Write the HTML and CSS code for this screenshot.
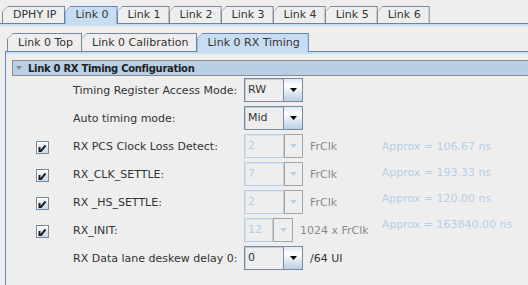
FILE: index.html
```html
<!DOCTYPE html>
<html lang="en">
<head>
    <meta charset="UTF-8">
    <title>Link 0 RX Timing</title>
    <link rel="stylesheet" href="styles.css">
</head>
<body>
    <div class="tabs">
        <div class="tab"><span>DPHY IP</span></div>
        <div class="tab tab-active"><span>Link 0</span></div>
        <div class="tab"><span>Link 1</span></div>
        <div class="tab"><span>Link 2</span></div>
        <div class="tab"><span>Link 3</span></div>
        <div class="tab"><span>Link 4</span></div>
        <div class="tab"><span>Link 5</span></div>
        <div class="tab"><span>Link 6</span></div>
    </div>

    <div class="pane">
        <div class="tabs sub-tabs">
            <div class="tab"><span>Link 0 Top</span></div>
            <div class="tab"><span>Link 0 Calibration</span></div>
            <div class="tab tab-active"><span>Link 0 RX Timing</span></div>
        </div>

        <div class="pane subpane">
            <div class="section-head"><i class="caret"></i>Link 0 RX Timing Configuration</div>

            <div class="form">
                <div class="rows">
                    <span></span>
                    <label>Timing Register Access Mode:</label>
                    <div class="ctl">
                        <div class="combo">
                            <div class="combo-field">RW</div>
                            <div class="combo-btn"><svg width="7" height="4"><path d="M0 0h7L3.5 4z"/></svg></div>
                        </div>
                    </div>

                    <span></span>
                    <label>Auto timing mode:</label>
                    <div class="ctl">
                        <div class="combo">
                            <div class="combo-field">Mid</div>
                            <div class="combo-btn"><svg width="7" height="4"><path d="M0 0h7L3.5 4z"/></svg></div>
                        </div>
                    </div>

                    <span class="check"><svg width="11" height="11"><path d="M2.5 5V9h1.5L8.5 3.5" fill="none" stroke="#222" stroke-width="2"/></svg></span>
                    <label>RX PCS Clock Loss Detect:</label>
                    <div class="ctl">
                        <div class="combo combo-off">
                            <div class="combo-field">2</div>
                            <div class="combo-btn"><svg width="7" height="4"><path d="M0 0h7L3.5 4z"/></svg></div>
                        </div>
                        <span class="unit">FrClk</span>
                    </div>

                    <span class="check"><svg width="11" height="11"><path d="M2.5 5V9h1.5L8.5 3.5" fill="none" stroke="#222" stroke-width="2"/></svg></span>
                    <label>RX_CLK_SETTLE:</label>
                    <div class="ctl">
                        <div class="combo combo-off">
                            <div class="combo-field">7</div>
                            <div class="combo-btn"><svg width="7" height="4"><path d="M0 0h7L3.5 4z"/></svg></div>
                        </div>
                        <span class="unit">FrClk</span>
                    </div>

                    <span class="check"><svg width="11" height="11"><path d="M2.5 5V9h1.5L8.5 3.5" fill="none" stroke="#222" stroke-width="2"/></svg></span>
                    <label>RX _HS_SETTLE:</label>
                    <div class="ctl">
                        <div class="combo combo-off">
                            <div class="combo-field">2</div>
                            <div class="combo-btn"><svg width="7" height="4"><path d="M0 0h7L3.5 4z"/></svg></div>
                        </div>
                        <span class="unit">FrClk</span>
                    </div>

                    <span class="check"><svg width="11" height="11"><path d="M2.5 5V9h1.5L8.5 3.5" fill="none" stroke="#222" stroke-width="2"/></svg></span>
                    <label>RX_INIT:</label>
                    <div class="ctl">
                        <div class="combo combo-off combo-small">
                            <div class="combo-field">12</div>
                            <div class="combo-btn"><svg width="7" height="4"><path d="M0 0h7L3.5 4z"/></svg></div>
                        </div>
                        <span class="unit">1024 x FrClk</span>
                    </div>

                    <span></span>
                    <label>RX Data lane deskew delay 0:</label>
                    <div class="ctl">
                        <div class="combo">
                            <div class="combo-field">0</div>
                            <div class="combo-btn"><svg width="7" height="4"><path d="M0 0h7L3.5 4z"/></svg></div>
                        </div>
                        <span>/64 UI</span>
                    </div>
                </div>

                <div class="approx">
                    <div>Approx = 106.67 ns</div>
                    <div>Approx = 193.33 ns</div>
                    <div>Approx = 120.00 ns</div>
                    <div>Approx = 163840.00 ns</div>
                </div>
            </div>
        </div>
    </div>
</body>
</html>
```

FILE: styles.css
```css
:root {
    --bg: #eeeeee;
    --blue-dark: #6382bf;
    --blue-light: #c8ddf2;
    --blue-mid: #b8cfe5;
    --steel: #7a8a99;
}

body {
    margin: 0;
    background: var(--bg);
    font-family: "DejaVu Sans", sans-serif;
    font-size: 11px;
    color: #333333;
    height: 285px;
    overflow: hidden;
}

/* tab strips */
.tabs {
    display: flex;
    align-items: flex-end;
    padding-left: 2px;
    margin-top: 6px;
    height: 17px;
}

.sub-tabs {
    margin-top: 0;
    height: 18px;
}

.tab {
    background: var(--steel);
    padding: 1px 1px 0;
    clip-path: polygon(0 6px, 6px 0, 100% 0, 100% 100%, 0 100%);
}

.tab + .tab {
    margin-left: -1px;
}

.tab span {
    display: block;
    height: 16px;
    line-height: 16px;
    padding: 0 8px 0 10px;
    background: var(--bg);
    white-space: nowrap;
    clip-path: polygon(0 4.6px, 4.6px 0, 100% 0, 100% 100%, 0 100%);
}

.sub-tabs .tab span {
    height: 17px;
    line-height: 17px;
}

.tab-active {
    position: relative;
    z-index: 1;
    margin-bottom: -1px;
    background: var(--blue-dark);
}

.tab-active span {
    height: 17px;
    background: var(--blue-light);
}

.sub-tabs .tab-active span {
    height: 18px;
}

/* panes */
.pane {
    border-top: 1px solid var(--blue-dark);
    box-shadow: inset 0 2px 0 var(--blue-light);
    padding: 9px 0 0 5px;
}

.subpane {
    box-sizing: border-box;
    border-left: 1px solid var(--blue-dark);
    padding: 8px 0 0 6px;
    height: 234px;
}

.section-head {
    display: flex;
    align-items: center;
    height: 14px;
    border: 1px solid #8c8c8c;
    border-right: 0;
    background: var(--blue-mid);
    padding-left: 3px;
    font-size: 10px;
    font-weight: bold;
    letter-spacing: -0.3px;
    color: #222222;
}

.caret {
    width: 0;
    height: 0;
    border-left: 3px solid transparent;
    border-right: 3px solid transparent;
    border-top: 4px solid #8a8a8a;
    margin-right: 6px;
}

/* form */
.form {
    display: flex;
    margin-top: 2px;
}

.rows {
    display: grid;
    grid-template-columns: 37px 171px auto;
    grid-auto-rows: 24px;
    row-gap: 4px;
    padding-left: 24px;
    align-items: center;
}

.check {
    box-sizing: border-box;
    width: 13px;
    height: 13px;
    margin-top: 3px;
    border: 1px solid var(--steel);
    background: linear-gradient(#f6f9fc, #c9d9ea);
    box-shadow: inset 1px 1px 0 #ffffff;
    display: flex;
}

.ctl {
    display: flex;
    align-items: center;
    gap: 7px;
    white-space: nowrap;
}

.unit {
    color: #8a8a8a;
}

.combo {
    display: flex;
    height: 24px;
}

.combo-field {
    box-sizing: border-box;
    width: 40px;
    border: 1px solid var(--steel);
    box-shadow: inset 1px 1px 0 var(--blue-mid);
    padding: 0 0 2px 3px;
    display: flex;
    align-items: center;
}

.combo-btn {
    box-sizing: border-box;
    width: 19px;
    border: 1px solid var(--steel);
    border-left: 0;
    background: linear-gradient(#dde8f3, #ffffff 30%, var(--blue-mid));
    display: flex;
    align-items: center;
    justify-content: center;
}

.combo-btn svg {
    fill: #000000;
}

.combo-off .combo-field {
    border-color: var(--blue-mid);
    box-shadow: inset 1px 1px 0 #d6e3f0;
    color: var(--blue-mid);
}

.combo-off .combo-btn {
    border: 1px solid #a4a4a4;
    background: var(--bg);
}

.combo-off .combo-btn svg {
    fill: var(--blue-mid);
}

.combo-small .combo-field {
    width: 29px;
}

.combo-small .combo-btn {
    width: 20px;
}

.approx {
    margin: 56px 0 0 13px;
    line-height: 26px;
    color: var(--blue-mid);
    white-space: nowrap;
}
```
